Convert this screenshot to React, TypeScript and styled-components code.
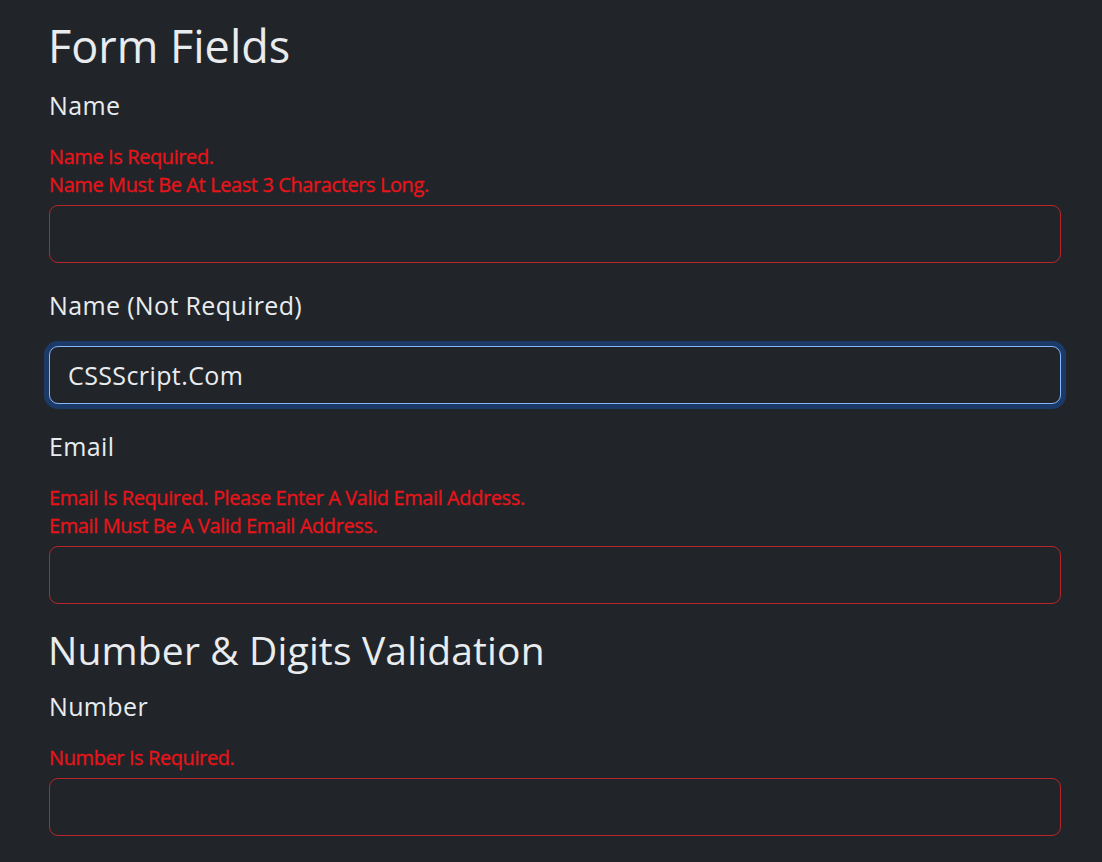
import React, { useEffect, useRef } from "react";
import styled, { createGlobalStyle, css } from "styled-components";

const GlobalStyle = createGlobalStyle`
  html, body {
    margin: 0;
    padding: 0;
    background-color: #212529;
  }

  body {
    font-family: "Open Sans", "Noto Sans", sans-serif;
    color: #dee2e6;
  }
`;

const Page = styled.main`
  padding: 19px 41px 0 49px;
  min-height: 862px;
  box-sizing: border-box;
`;

const Title = styled.h2`
  margin: 0 0 14px -1px;
  font-size: 45px;
  line-height: 54px;
  font-weight: 400;
  color: #e9ecef;
`;

const SubTitle = styled.h3`
  margin: -2px 0 15px -1px;
  font-size: 39px;
  line-height: 47px;
  font-weight: 400;
  letter-spacing: 0.15px;
  color: #e9ecef;
`;

const Field = styled.div`
  margin-bottom: 24px;
`;

const Label = styled.label`
  display: block;
  margin-bottom: 23px;
  font-size: 25px;
  line-height: 36px;
  letter-spacing: 0.35px;
  color: #e9ecef;
`;

const Errors = styled.div`
  margin: -3px 0 6px;
  font-size: 20px;
  line-height: 28px;
  letter-spacing: -0.4px;
  color: #e8141a;
  -webkit-text-stroke: 0.3px #e8141a;
  text-transform: capitalize;
`;

const Input = styled.input<{ $state: "invalid" | "focused" }>`
  display: block;
  width: 100%;
  height: 58px;
  box-sizing: border-box;
  padding: 9px 18px;
  border-radius: 9px;
  background-color: #212529;
  font-family: inherit;
  font-size: 25px;
  letter-spacing: 0.4px;
  color: #e9ecef;
  caret-color: #ffffff;
  outline: none;

  ${({ $state }) =>
    $state === "focused"
      ? css`
          border: 1.5px solid #86b7fe;
          box-shadow: 0 0 0 5px rgba(13, 110, 253, 0.3);
        `
      : css`
          border: 1.5px solid #b8262b;
        `}
`;

type FieldSpec = {
  label: string;
  errors: string[];
  value?: string;
};

const fields: FieldSpec[] = [
  {
    label: "Name",
    errors: ["Name is required.", "Name must be at least 3 characters long."],
  },
  { label: "Name (Not Required)", errors: [], value: "CSSScript.Com" },
  {
    label: "Email",
    errors: [
      "Email is required. Please enter a valid email address.",
      "Email must be a valid email address.",
    ],
  },
];

const FormField: React.FC<{ spec: FieldSpec; id: string }> = ({ spec, id }) => {
  const ref = useRef<HTMLInputElement>(null);

  useEffect(() => {
    if (spec.value && ref.current) {
      const el = ref.current;
      el.focus();
      el.setSelectionRange(spec.value.length, spec.value.length);
    }
  }, [spec.value]);

  return (
    <Field>
      <Label htmlFor={id}>{spec.label}</Label>
      {spec.errors.length > 0 && (
        <Errors>
          {spec.errors.map((e) => (
            <div key={e}>{e}</div>
          ))}
        </Errors>
      )}
      <Input
        id={id}
        ref={ref}
        type="text"
        defaultValue={spec.value}
        $state={spec.errors.length > 0 ? "invalid" : "focused"}
      />
    </Field>
  );
};

const App: React.FC = () => {
  return (
    <>
      <GlobalStyle />
      <Page>
        <Title>Form Fields</Title>
        {fields.map((f, i) => (
          <FormField key={f.label} spec={f} id={`field-${i}`} />
        ))}
        <SubTitle>Number &amp; Digits Validation</SubTitle>
        <FormField
          spec={{ label: "Number", errors: ["Number is required."] }}
          id="field-number"
        />
      </Page>
    </>
  );
};

export default App;
